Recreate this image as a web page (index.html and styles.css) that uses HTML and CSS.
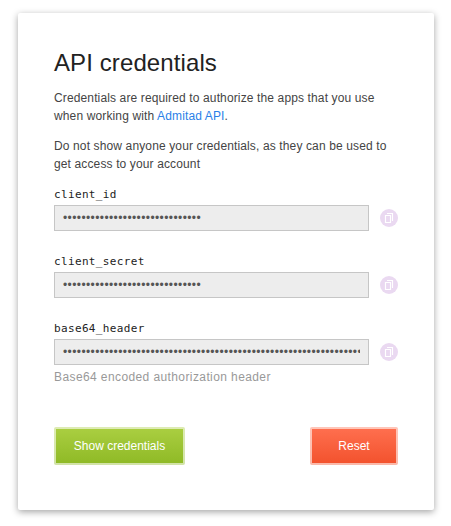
FILE: index.html
```html
<!DOCTYPE html>
<html lang="en">
<head>
<meta charset="utf-8">
<title>API credentials</title>
<link rel="stylesheet" href="styles.css">
</head>
<body>
<svg class="sprite" aria-hidden="true"><symbol id="copy" viewBox="0 0 18 18"><circle cx="9" cy="9" r="9" fill="#ead9f1"/><path d="M5.5 6.5h5v7h-5zM7 4.5h5.5v7.5" fill="none" stroke="#fff" stroke-width="1.15"/></symbol></svg>
<main class="card">
  <h1 class="title">API credentials</h1>
  <p class="text">Credentials are required to authorize the apps that you use<br>when working with <a class="link">Admitad API</a>.</p>
  <p class="text">Do not show anyone your credentials, as they can be used to<br>get access to your account</p>
  <div class="field">
    <div class="label">client_id</div>
    <div class="row"><div class="input"><div class="dots">••••••••••••••••••••••••••••••</div></div><svg class="copy"><use href="#copy"/></svg></div>
  </div>
  <div class="field">
    <div class="label">client_secret</div>
    <div class="row"><div class="input"><div class="dots">••••••••••••••••••••••••••••••</div></div><svg class="copy"><use href="#copy"/></svg></div>
  </div>
  <div class="field">
    <div class="label">base64_header</div>
    <div class="row"><div class="input"><div class="dots">•••••••••••••••••••••••••••••••••••••••••••••••••••••••••••••••••</div></div><svg class="copy"><use href="#copy"/></svg></div>
    <div class="hint">Base64 encoded authorization header</div>
  </div>
  <div class="actions">
    <button class="btn show">Show credentials</button>
    <button class="btn reset">Reset</button>
  </div>
</main>
</body>
</html>
```
FILE: styles.css
```css
* { box-sizing: border-box; }
body {
  min-height: 526px;
  margin: 0;
  padding: 13px 17px 0 18px;
  background: #fff;
  font-family: "Liberation Sans", Arial, sans-serif;
  font-size: 12px;
  color: #444;
}
.sprite { position: absolute; width: 0; height: 0; }
.card {
  height: 497px;
  padding: 35px 36px 0;
  background: #fff;
  border-radius: 2px;
  box-shadow: 0 2px 7px rgba(0, 0, 0, .36);
}
.title {
  margin: 0 0 11px;
  font-size: 24px;
  line-height: 30px;
  font-weight: 400;
  letter-spacing: .1px;
  color: #222;
}
.text {
  margin: 0 0 12px;
  line-height: 18px;
  letter-spacing: .13px;
  white-space: nowrap;
}
.link { color: #2a7fe8; }
.field { height: 67px; }
.label {
  height: 20px;
  padding-top: 1px;
  font: 11px/18px "DejaVu Sans Mono", monospace;
  letter-spacing: .35px;
  color: #222;
}
.row { display: flex; align-items: center; gap: 11px; }
.input {
  width: 315px;
  height: 26px;
  padding: 0 8px;
  border: 1px solid #c6c6c6;
  background: #ededed;
}
.dots {
  overflow: hidden;
  line-height: 24px;
  letter-spacing: .4px;
  white-space: nowrap;
  color: #555;
}
.copy { width: 18px; height: 18px; }
.hint {
  margin-top: 3px;
  line-height: 18px;
  letter-spacing: .4px;
  color: #999;
}
.actions {
  display: flex;
  justify-content: space-between;
  width: 344px;
  margin-top: 41px;
}
.btn {
  height: 38px;
  padding: 0;
  border: 2px solid rgba(255, 255, 255, .6);
  border-radius: 2px;
  font: 12px "Liberation Sans", Arial, sans-serif;
  color: #fff;
}
.show { width: 131px; background: linear-gradient(#abcf42, #8eb925) border-box; }
.reset { width: 88px; background: linear-gradient(#ff7050, #f2512c) border-box; }
```
